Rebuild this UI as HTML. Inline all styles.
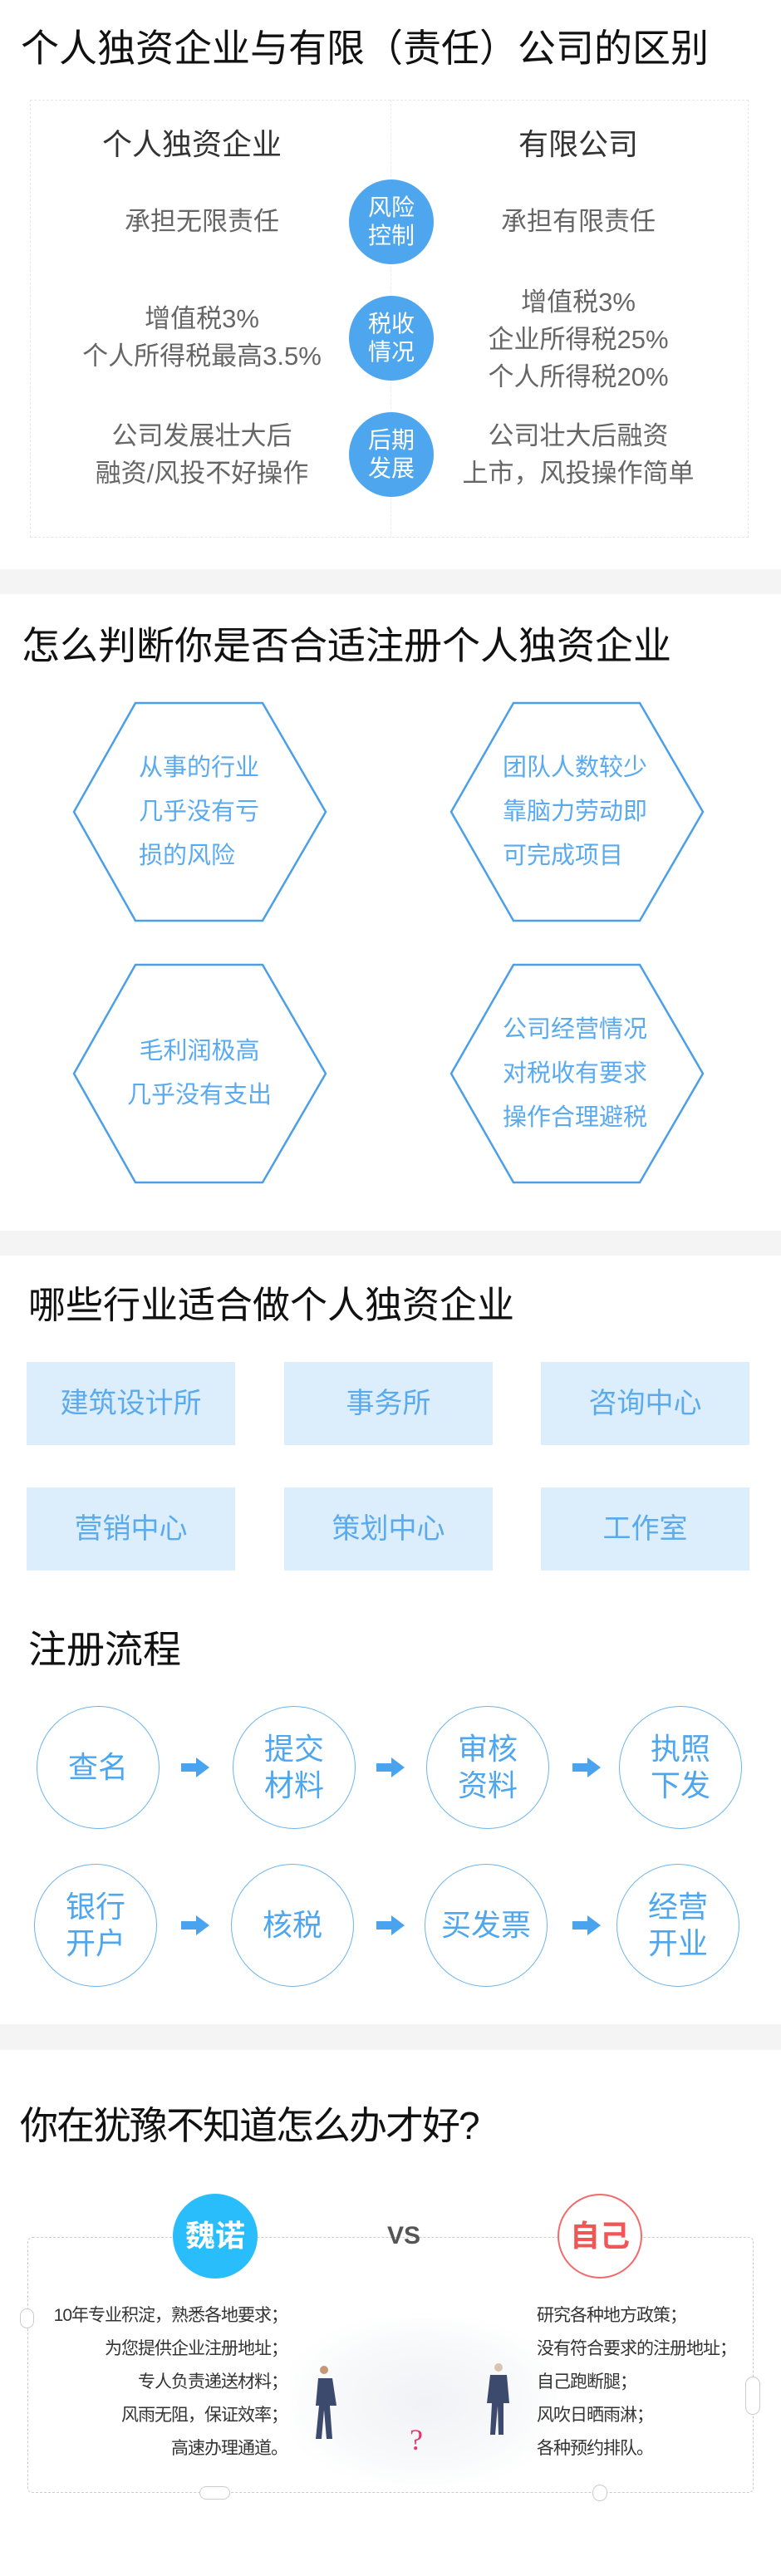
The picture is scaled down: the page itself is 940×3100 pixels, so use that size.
<!DOCTYPE html>
<html><head><meta charset="utf-8">
<style>
*{margin:0;padding:0;box-sizing:border-box}
body{width:940px;height:3100px;position:relative;background:#fff;font-family:"Liberation Sans","Noto Sans CJK SC",sans-serif;overflow:hidden}
.a{position:absolute;white-space:nowrap}
.band{position:absolute;left:0;width:940px;background:#f4f4f4}
.h{font-size:45px;color:#111;line-height:1}
.g{color:#666;font-size:31px;text-align:center;line-height:45px}
.circ{position:absolute;width:102px;height:102px;border-radius:50%;background:#4ea6ee;color:#fff;font-size:28px;line-height:34px;text-align:center;padding-top:17px}
.ht{color:#5aaaf0;font-size:29px;line-height:53px}
.box{position:absolute;width:251px;height:100px;background:#dcedfc;color:#5aaaec;font-size:34px;line-height:100px;text-align:center}
.fc{position:absolute;width:148px;height:148px;border-radius:50%;border:1.5px solid #6ab4ee;color:#4ea6ee;font-size:36px;line-height:44px;text-align:center;display:flex;align-items:center;justify-content:center}
.lt{font-size:21px;color:#333;line-height:40px;letter-spacing:-1px}
</style></head><body>

<!-- Section 1 -->
<div class="a h" style="left:25px;top:35px;font-size:46px">个人独资企业与有限（责任）公司的区别</div>
<div class="a" style="left:36px;top:120px;width:865px;height:527px;border:1px dashed #e6e6e6"></div>
<div class="a" style="left:470px;top:120px;width:0;height:527px;border-left:1px dashed #ececec"></div>
<div class="a" style="left:111px;top:145px;width:240px;text-align:center;font-size:36px;color:#333">个人独资企业</div>
<div class="a" style="left:576px;top:145px;width:240px;text-align:center;font-size:36px;color:#333">有限公司</div>

<div class="circ" style="left:420px;top:216px">风险<br>控制</div>
<div class="circ" style="left:420px;top:356px">税收<br>情况</div>
<div class="circ" style="left:420px;top:496px">后期<br>发展</div>

<div class="a g" style="left:43px;top:244px;width:400px">承担无限责任</div>
<div class="a g" style="left:496px;top:244px;width:400px">承担有限责任</div>
<div class="a g" style="left:43px;top:361px;width:400px">增值税3%<br>个人所得税最高3.5%</div>
<div class="a g" style="left:496px;top:341px;width:400px">增值税3%<br>企业所得税25%<br>个人所得税20%</div>
<div class="a g" style="left:43px;top:502px;width:400px">公司发展壮大后<br>融资/风投不好操作</div>
<div class="a g" style="left:496px;top:502px;width:400px">公司壮大后融资<br>上市，风投操作简单</div>

<div class="band" style="top:685px;height:30px"></div>

<!-- Section 2 -->
<div class="a h" style="left:26px;top:754px;font-size:46px">怎么判断你是否合适注册个人独资企业</div>
<svg class="a" style="left:0;top:0" width="940" height="1500">
<g fill="none" stroke="#4a9fe8" stroke-width="2.5">
<polygon points="163,846 316,846 392,977 316,1108 163,1108 89,977"/>
<polygon points="618,846 770,846 846,977 770,1108 618,1108 543,977"/>
<polygon points="163,1161 316,1161 392,1292 316,1423 163,1423 89,1292"/>
<polygon points="618,1161 770,1161 846,1292 770,1423 618,1423 543,1292"/>
</g></svg>
<div class="a ht" style="left:167px;top:898px">从事的行业<br>几乎没有亏<br>损的风险</div>
<div class="a ht" style="left:605px;top:898px">团队人数较少<br>靠脑力劳动即<br>可完成项目</div>
<div class="a ht" style="left:90px;top:1239px;width:300px;text-align:center">毛利润极高<br>几乎没有支出</div>
<div class="a ht" style="left:605px;top:1213px">公司经营情况<br>对税收有要求<br>操作合理避税</div>

<div class="band" style="top:1481px;height:30px"></div>

<!-- Section 3 -->
<div class="a h" style="left:34px;top:1548px;font-size:45px">哪些行业适合做个人独资企业</div>
<div class="box" style="left:32px;top:1639px">建筑设计所</div>
<div class="box" style="left:342px;top:1639px">事务所</div>
<div class="box" style="left:651px;top:1639px">咨询中心</div>
<div class="box" style="left:32px;top:1790px">营销中心</div>
<div class="box" style="left:342px;top:1790px">策划中心</div>
<div class="box" style="left:651px;top:1790px">工作室</div>

<div class="a h" style="left:34px;top:1962px;font-size:46px">注册流程</div>
<div class="fc" style="left:44px;top:2053px">查名</div>
<div class="fc" style="left:280px;top:2053px">提交<br>材料</div>
<div class="fc" style="left:513px;top:2053px">审核<br>资料</div>
<div class="fc" style="left:745px;top:2053px">执照<br>下发</div>
<div class="fc" style="left:41px;top:2243px">银行<br>开户</div>
<div class="fc" style="left:278px;top:2243px">核税</div>
<div class="fc" style="left:511px;top:2243px">买发票</div>
<div class="fc" style="left:742px;top:2243px">经营<br>开业</div>
<svg class="a" style="left:0;top:0" width="940" height="2400"><g fill="#4aa3ee">
<polygon points="218,2122 236,2122 236,2115 252,2127 236,2139 236,2132 218,2132"/>
<polygon points="453,2122 471,2122 471,2115 487,2127 471,2139 471,2132 453,2132"/>
<polygon points="689,2122 707,2122 707,2115 723,2127 707,2139 707,2132 689,2132"/>
<polygon points="218,2312 236,2312 236,2305 252,2317 236,2329 236,2322 218,2322"/>
<polygon points="453,2312 471,2312 471,2305 487,2317 471,2329 471,2322 453,2322"/>
<polygon points="689,2312 707,2312 707,2305 723,2317 707,2329 707,2322 689,2322"/>
</g></svg>

<div class="band" style="top:2436px;height:31px"></div>

<!-- Section 4 -->
<div class="a" style="left:24px;top:2522px;font-size:46px;color:#111;letter-spacing:-2px">你在犹豫不知道怎么办才好?</div>
<div class="a" style="left:33px;top:2692px;width:874px;height:308px;border:1.5px dashed #ccc;border-radius:6px"></div>
<div class="a" style="left:350px;top:2790px;width:320px;height:200px;background:radial-gradient(ellipse at center,#f1f2f6 0%,#f8f9fa 50%,#fff 78%)"></div>
<div class="a" style="left:24px;top:2778px;width:17px;height:24px;border:1.5px solid #ccc;border-radius:9px;background:#fff"></div>
<div class="a" style="left:897px;top:2860px;width:18px;height:46px;border:1.5px solid #ccc;border-radius:9px;background:#fff"></div>
<div class="a" style="left:240px;top:2992px;width:37px;height:16px;border:1.5px solid #ccc;border-radius:8px;background:#fff"></div>
<div class="a" style="left:713px;top:2990px;width:18px;height:20px;border:1.5px solid #ccc;border-radius:9px;background:#fff"></div>
<div class="a" style="left:208px;top:2640px;width:102px;height:102px;border-radius:50%;background:#29bdfb;color:#fff;font-size:36px;font-weight:bold;line-height:102px;text-align:center">魏诺</div>
<div class="a" style="left:466px;top:2674px;font-size:30px;font-weight:bold;color:#555;line-height:34px">VS</div>
<div class="a" style="left:671px;top:2640px;width:102px;height:102px;border-radius:50%;border:2px solid #f26a6a;background:#fff;color:#f25555;font-size:36px;font-weight:bold;line-height:98px;text-align:center">自己</div>
<div class="a lt" style="left:0;top:2767px;width:346px;text-align:right">10年专业积淀，熟悉各地要求；<br>为您提供企业注册地址；<br>专人负责递送材料；<br>风雨无阻，保证效率；<br>高速办理通道。</div>
<div class="a lt" style="left:646px;top:2767px">研究各种地方政策；<br>没有符合要求的注册地址；<br>自己跑断腿；<br>风吹日晒雨淋；<br>各种预约排队。</div>
<svg class="a" style="left:0;top:0" width="940" height="3100">
<g fill="#3c4a6e">
<circle cx="390" cy="2852" r="5" fill="#c9967a"/>
<path d="M383 2862 L400 2862 L405 2895 L397 2895 L400 2935 L393 2935 L390 2900 L387 2935 L380 2935 L384 2895 L380 2895 Z"/>
<circle cx="600" cy="2849" r="5" fill="#d9c4b0"/>
<path d="M590 2858 L610 2858 L613 2892 L606 2892 L606 2930 L600 2930 L599 2895 L596 2930 L590 2930 L592 2892 L586 2892 Z"/>
</g>
<text x="493" y="2948" font-size="36" fill="#e8386a" font-family="Liberation Serif,serif">?</text>
</svg>
</body></html>
